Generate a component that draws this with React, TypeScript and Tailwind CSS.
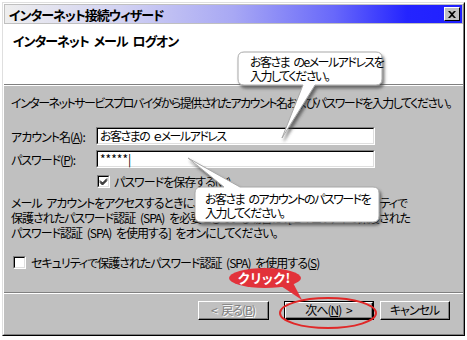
import React from "react";

const jp = "font-['Noto_Sans_CJK_JP','Noto_Sans',sans-serif] [font-feature-settings:'palt']";

function Check({ checked }: { checked?: boolean }) {
  return (
    <div className="w-[13px] h-[13px] bg-white border-t border-l border-t-[#808080] border-l-[#808080] border-b border-r border-b-white border-r-white shrink-0">
      <div className="w-full h-full border-t border-l border-t-black border-l-black border-b border-r border-b-[#dfdfdf] border-r-[#dfdfdf] flex items-center justify-center">
        {checked && (
          <svg width="9" height="9" viewBox="0 0 9 9">
            <path d="M1 3.5 L3.5 6 L8 1.5 M1 4.5 L3.5 7 L8 2.5 M1 5.5 L3.5 8 L8 3.5" stroke="#000" strokeWidth="1" fill="none" />
          </svg>
        )}
      </div>
    </div>
  );
}

function Input({ value }: { value: React.ReactNode }) {
  return (
    <div className="w-[279px] h-[18px] bg-white border-t border-l border-t-[#808080] border-l-[#808080] border-b border-r border-b-white border-r-white">
      <div className="w-full h-full border-t border-l border-t-black border-l-black border-b border-r border-b-[#dfdfdf] border-r-[#dfdfdf] flex items-center pl-[2px] text-[12px] leading-none text-black">
        {value}
      </div>
    </div>
  );
}

function Button({ children, disabled, def, w }: { children: React.ReactNode; disabled?: boolean; def?: boolean; w: string }) {
  return (
    <div className={`${w} h-[19px] ${def ? "border border-black" : ""}`}>
      <div className="w-full h-full border-t border-l border-t-white border-l-white border-b border-r border-b-black border-r-black">
        <div className={`w-full h-full border-b border-r border-b-[#808080] border-r-[#808080] flex items-center justify-center text-[12px] leading-none ${disabled ? "text-[#808080] [text-shadow:1px_1px_0_#fff]" : "text-black"}`}>
          {children}
        </div>
      </div>
    </div>
  );
}

export default function App() {
  return (
    <div className={`relative w-[467px] h-[340px] bg-white overflow-hidden tracking-[-1px] [word-spacing:3px] ${jp}`}>
      <div className="ml-[2px] mt-[2px] w-[463px] h-[334px] flex flex-col bg-[#c0c0c0] border-t border-l border-t-[#dfdfdf] border-l-[#dfdfdf] border-b border-r border-b-black border-r-black">
        <div className="flex flex-col flex-1 border-t border-l border-t-white border-l-white border-b border-r border-b-[#808080] border-r-[#808080]">
          {/* title bar */}
          <div className="mx-[1px] mt-[1px] h-[18px] flex items-center justify-between pl-[4px] pr-[2px] bg-[linear-gradient(90deg,#eeeeee_0%,#d2d2f2_25%,#a8a8f4_50%,#6868fa_72%,#2424ff_88%,#2020ff_100%)]">
            <span className="text-[13px] font-bold text-black leading-none">インターネット接続ウィザード</span>
            <div className="w-[16px] h-[14px] bg-[#c0c0c0] border-t border-l border-t-white border-l-white border-b border-r border-b-black border-r-black flex items-center justify-center">
              <svg width="8" height="7" viewBox="0 0 8 7">
                <path d="M0 0 L2 0 L4 2 L6 0 L8 0 L5 3.5 L8 7 L6 7 L4 5 L2 7 L0 7 L3 3.5 Z" fill="#000" />
              </svg>
            </div>
          </div>
          {/* header */}
          <div className="mt-[1px] h-[60px] bg-white pl-[9px] pt-[10px] text-[13px] leading-none">
            <span className="font-bold text-black">インターネット メール ログオン</span>
          </div>
          <div className="h-[1px] bg-[#808080]" />
          <div className="h-[1px] bg-white" />
          {/* body */}
          <div className="flex flex-col pl-[7px] text-[12px] text-black leading-[15px]">
            <div className="mt-[9px] whitespace-nowrap tracking-[-1.5px]">インターネットサービスプロバイダから提供されたアカウント名およびパスワードを入力してください。</div>
            <div className="mt-[17px] flex items-center">
              <span className="w-[85px]">アカウント名(<u>A</u>):</span>
              <Input value={<span className="tracking-[-1.5px]">お客さまの ｅメールアドレス</span>} />
            </div>
            <div className="mt-[5px] flex items-center">
              <span className="w-[85px]">パスワード(<u>P</u>):</span>
              <Input value={<span className="tracking-[0px]">*****|</span>} />
            </div>
            <div className="mt-[6px] flex items-center gap-[4px] pl-[86px]">
              <Check checked />
              <span>パスワードを保存する(<u>W</u>)</span>
            </div>
            <div className="mt-[6px] whitespace-nowrap">
              <div>メール アカウントをアクセスするときに、インターネット プロバイダーがセキュリティで</div>
              <div>保護されたパスワード認証 (SPA) を必要としている場合は、[セキュリティで保護された</div>
              <div>パスワード認証 (SPA) を使用する] をオンにしてください。</div>
            </div>
            <div className="mt-[15px] flex items-center gap-[5px] pl-[2px]">
              <Check />
              <span>セキュリティで保護されたパスワード認証 (SPA) を使用する(<u>S</u>)</span>
            </div>
          </div>
          <div className="mt-[22px] h-[1px] bg-[#808080]" />
          <div className="h-[1px] bg-white" />
          <div className="mt-[7px] flex justify-end items-center pr-[13px]">
            <Button w="w-[71px]" disabled>&lt; 戻る(<u>B</u>)</Button>
            <div className="w-[15px]" />
            <Button w="w-[90px]" def>次へ(<u>N</u>) &gt;</Button>
            <div className="w-[6px]" />
            <Button w="w-[70px]">キャンセル</Button>
          </div>
        </div>
      </div>

      {/* overlays */}
      <svg className="absolute left-0 top-0 pointer-events-none" width="467" height="340" viewBox="0 0 467 340">
        <defs>
          <filter id="sh" x="-20%" y="-20%" width="140%" height="160%">
            <feDropShadow dx="2" dy="3" stdDeviation="1.5" floodColor="#404040" floodOpacity="0.7" />
          </filter>
        </defs>
        <path
          d="M244,52 H376 Q382,52 382,58 V79 Q382,85 376,85 H315 L282,138 L303,85 H244 Q238,85 238,79 V58 Q238,52 244,52 Z"
          fill="#fff" stroke="#a8a8a8" strokeWidth="1" filter="url(#sh)"
        />
        <path
          d="M201,187 H224 L188,158 L240,187 H373 Q379,187 379,193 V216 Q379,222 373,222 H201 Q195,222 195,216 V193 Q195,187 201,187 Z"
          fill="#fff" stroke="#a8a8a8" strokeWidth="1" filter="url(#sh)"
        />
        <ellipse cx="328" cy="313" rx="48" ry="15" fill="none" stroke="#e02828" strokeWidth="2" />
        <path d="M278,284 L302,300 L291,279 Z" fill="#e2323a" />
        <ellipse cx="265" cy="278" rx="36" ry="10" fill="#e2323a" />
      </svg>
      <div className="absolute left-[250px] top-[55px] text-[12px] leading-[14px] text-black whitespace-nowrap tracking-[-1.5px]">
        <div>お客さま のeメールアドレスを</div>
        <div>入力してください。</div>
      </div>
      <div className="absolute left-[205px] top-[192px] text-[12px] leading-[14px] text-black whitespace-nowrap tracking-[-1.5px]">
        <div>お客さま のアカウントのパスワードを</div>
        <div>入力してください。</div>
      </div>
      <div className="absolute left-[238px] top-[270px] text-[13px] leading-[16px] font-bold text-white whitespace-nowrap tracking-[0.5px]">
        クリック!
      </div>
    </div>
  );
}
